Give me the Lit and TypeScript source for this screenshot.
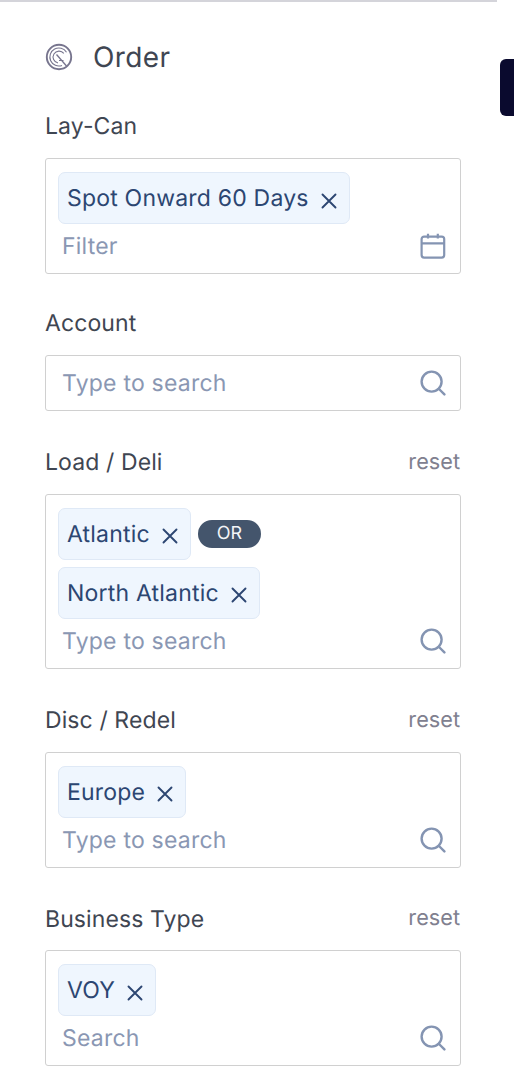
import { LitElement, html, css, svg } from "lit";
import { customElement } from "lit/decorators.js";

const xIcon = html`<svg class="x" viewBox="0 0 16 16" width="16" height="16"><path d="M1.5 1.5 14.5 14.5M14.5 1.5 1.5 14.5" fill="none" stroke="#2c4672" stroke-width="1.9" stroke-linecap="round"/></svg>`;
const searchIcon = html`<svg class="ic" viewBox="0 0 26 26" width="26" height="26"><circle cx="11.6" cy="11.6" r="10" fill="none" stroke="#8494b2" stroke-width="2.4"/><path d="M19 19l5.4 5.4" fill="none" stroke="#8494b2" stroke-width="2.4" stroke-linecap="round"/></svg>`;
const calIcon = html`<svg class="ic" viewBox="0 0 26 26" width="26" height="26"><rect x="1.6" y="3.6" width="22.6" height="21" rx="2.5" fill="none" stroke="#8494b2" stroke-width="2.2"/><path d="M1.6 10.4H24.2M8 .8V5.4M17.8 .8V5.4" fill="none" stroke="#8494b2" stroke-width="2.2"/></svg>`;
const orderIcon = html`<svg class="order" viewBox="0 0 28 28" width="28" height="28" fill="none" stroke="#77758e">${svg`
  <circle cx="14" cy="14" r="12.2" stroke-width="1.9"/>
  <path d="M21.5 9.2A9 9 0 1 0 17 22.4" stroke-width="1.1"/>
  <path d="M18.8 10.4A6 6 0 1 0 13 20" stroke-width="1.1"/>
  <path d="M11.5 11.5 21.5 23" stroke-width="1.3"/>
  <path d="M14 17.5h4.5" stroke-width="1"/>`}</svg>`;

type Field = {
  label: string;
  reset?: boolean;
  placeholder: string;
  icon: "search" | "cal";
  chips: { t: string; or?: boolean }[];
};

const fields: Field[] = [
  { label: "Lay-Can", placeholder: "Filter", icon: "cal", chips: [{ t: "Spot Onward 60 Days" }] },
  { label: "Account", placeholder: "Type to search", icon: "search", chips: [] },
  { label: "Load / Deli", reset: true, placeholder: "Type to search", icon: "search", chips: [{ t: "Atlantic", or: true }, { t: "North Atlantic" }] },
  { label: "Disc / Redel", reset: true, placeholder: "Type to search", icon: "search", chips: [{ t: "Europe" }] },
  { label: "Business Type", reset: true, placeholder: "Search", icon: "search", chips: [{ t: "VOY" }] },
];

@customElement("app-root")
export class AppRoot extends LitElement {
  static styles = css`
    :host { display: block; position: relative; width: 514px; height: 1088px; overflow: hidden; background: #fff; font-family: Inter, "Liberation Sans", sans-serif; text-rendering: geometricPrecision; font-weight: 380; }
    .rule { width: 497px; height: 2px; background: #d4d4da; }
    .tab { position: absolute; left: 500px; top: 59px; width: 14px; height: 57px; background: #0a0a2e; border-radius: 6px 0 0 6px; }
    .panel { width: 416px; margin-left: 45px; display: flex; flex-direction: column; }
    .head { display: flex; align-items: center; gap: 20px; height: 32px; margin-top: 39px; margin-bottom: 40px; }
    .order { flex: none; }
    .title { font-size: 28px; letter-spacing: 0.4px; color: #3f4652; line-height: 32px; }
    .section { margin-bottom: 36px; }
    .lab { display: flex; justify-content: space-between; align-items: center; box-sizing: border-box; height: 27px; padding-bottom: 1px; margin-bottom: 18px; font-size: 23px; letter-spacing: 0.1px; color: #3f4652; }
    .lab.has-reset { height: 28.8px; padding-bottom: 0; padding-top: 1px; }
    .reset { font-size: 21.7px; letter-spacing: 0; padding-right: 1px; color: #80808f; }
    .box { border: 1px solid #d0d0d0; border-radius: 3px; padding: 5px 13px 5px 12px; display: flex; flex-direction: column; }
    .chips { display: flex; flex-wrap: wrap; align-items: center; gap: 7px; padding: 8px 0 0 0; }
    .chip { display: flex; align-items: center; gap: 12px; height: 52px; box-sizing: border-box; padding: 0 12px 0 8px; background: #eff6fe; border: 1px solid #dfe9f6; border-radius: 7px; color: #2c4672; font-size: 23px; letter-spacing: 0.2px; white-space: nowrap; }
    .x { margin-top: 5px; flex: none; }
    .or { display: flex; align-items: center; justify-content: center; width: 63px; height: 28px; border-radius: 14px; background: #44556c; color: #f2f4f7; font-size: 18px; }
    .row { display: flex; align-items: center; justify-content: space-between; height: 44px; padding-left: 4px; padding-right: 1px; }
    .ph { font-size: 23px; letter-spacing: 0.22px; color: #8a97b3; }
    .ic { flex: none; }
  `;

  render() {
    return html`
      <div class="rule"></div>
      <div class="tab"></div>
      <div class="panel">
        <div class="head">${orderIcon}<span class="title">Order</span></div>
        ${fields.map(
          (f) => html`<section class="section">
            <div class="lab ${f.reset ? "has-reset" : ""}"><span>${f.label}</span>${f.reset ? html`<span class="reset">reset</span>` : ""}</div>
            <div class="box">
              ${f.chips.length
                ? html`<div class="chips">
                    ${f.chips.map(
                      (c) => html`<span class="chip">${c.t}${xIcon}</span>${c.or ? html`<span class="or">OR</span>` : ""}`
                    )}
                  </div>`
                : ""}
              <div class="row"><span class="ph">${f.placeholder}</span>${f.icon === "cal" ? calIcon : searchIcon}</div>
            </div>
          </section>`
        )}
      </div>
    `;
  }
}
